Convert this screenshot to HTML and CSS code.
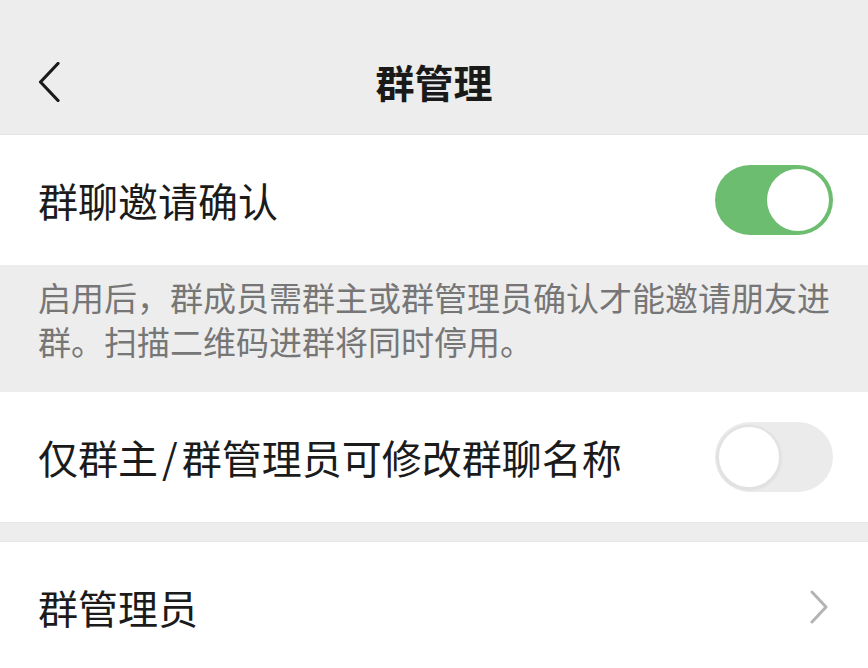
FILE: index.html
```html
<!DOCTYPE html>
<html lang="zh-CN">
<head>
<meta charset="utf-8">
<title>群管理</title>
<link rel="stylesheet" href="styles.css">
</head>
<body>
<div class="page">
  <header class="header">
    <div class="bar">
      <span class="back">
        <svg width="24" height="40" viewBox="0 0 24 40"><path d="M20 1.5 L2.5 20 L20 38.5" fill="none" stroke="#1a1a1a" stroke-width="3.2" stroke-linecap="round" stroke-linejoin="round"/></svg>
      </span>
      <h1 class="title">群管理</h1>
    </div>
  </header>

  <div class="row">
    <span class="label">群聊邀请确认</span>
    <span class="switch on"><span class="knob"></span></span>
  </div>

  <div class="desc">启用后，群成员需群主或群管理员确认才能邀请朋友进群。扫描二维码进群将同时停用。</div>

  <div class="row">
    <span class="label">仅群主<span class="slash">/</span>群管理员可修改群聊名称</span>
    <span class="switch off"><span class="knob"></span></span>
  </div>

  <div class="gap"></div>

  <div class="row">
    <span class="label">群管理员</span>
    <span class="arrow">
      <svg width="20" height="34" viewBox="0 0 20 34"><path d="M3 2 L17 17 L3 32" fill="none" stroke="#b4b4b4" stroke-width="3" stroke-linecap="round" stroke-linejoin="round"/></svg>
    </span>
  </div>
</div>
</body>
</html>
```

FILE: styles.css
```css
html, body {
  margin: 0;
  padding: 0;
  background: #ededed;
}

.page {
  width: 868px;
  height: 668px;
  overflow: hidden;
  font-family: "Noto Sans CJK SC", "Noto Sans", sans-serif;
  color: #1b1b1b;
}

.header {
  height: 135px;
  box-sizing: border-box;
  padding-top: 26px;
  background: #ededed;
  border-bottom: 1px solid #e4e4e4;
}

.bar {
  height: 110px;
  display: flex;
  align-items: center;
  justify-content: center;
  position: relative;
}

.back {
  position: absolute;
  left: 38px;
  top: 36px;
  display: flex;
}

.title {
  margin: 0;
  font-size: 39px;
  font-weight: 700;
  line-height: 1;
  color: #1a1a1a;
  letter-spacing: 0;
}

.row {
  height: 130px;
  box-sizing: border-box;
  background: #ffffff;
  display: flex;
  align-items: center;
  justify-content: space-between;
  padding: 0 35px 0 38px;
}

.label {
  font-size: 40px;
  line-height: 1;
  color: #1b1b1b;
}

.slash {
  margin: 0 4px;
}

.switch {
  width: 118px;
  height: 70px;
  border-radius: 35px;
  box-sizing: border-box;
  display: flex;
  align-items: center;
  padding: 0 4px;
}

.switch.on {
  background: #6cbd70;
  justify-content: flex-end;
}

.switch.off {
  background: #ebebeb;
  justify-content: flex-start;
  padding: 0 2px;
}

.knob {
  width: 62px;
  height: 62px;
  border-radius: 50%;
  background: #ffffff;
  box-sizing: border-box;
}

.switch.off .knob {
  width: 64px;
  height: 64px;
  border: 2px solid #e2e2e2;
  box-shadow: 0 1px 3px rgba(0, 0, 0, 0.08);
}

.desc {
  height: 127px;
  box-sizing: border-box;
  padding: 10px 36px 0 38px;
  font-size: 33px;
  line-height: 44px;
  color: #767676;
  background: #ededed;
}

.gap {
  height: 20px;
  background: #ededed;
  border-top: 1px solid #e6e6e6;
  border-bottom: 1px solid #e6e6e6;
  box-sizing: border-box;
}

.arrow {
  display: flex;
  margin-right: 4px;
}
```
